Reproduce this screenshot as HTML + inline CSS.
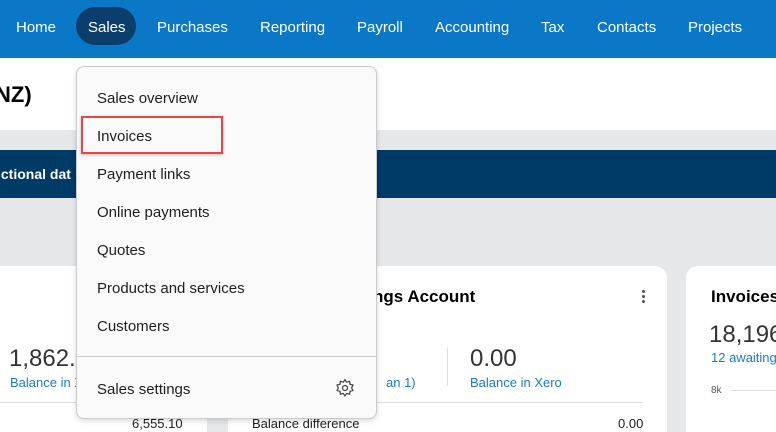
<!DOCTYPE html>
<html><head><style>
*{margin:0;padding:0;box-sizing:border-box}
html{width:776px;height:432px;overflow:hidden}
body{width:776px;height:432px;overflow:hidden;background:#e6e7e9;font-family:"Liberation Sans",sans-serif;position:relative;color:#000}
.a{position:absolute;white-space:nowrap}
.nav{position:absolute;left:0;top:0;width:776px;height:58px;background:#0a78c7}
.nav span{position:absolute;top:19px;font-size:15px;color:#fff}
.pill{position:absolute;left:76px;top:7px;width:60px;height:38px;border-radius:19px;background:#0b3e6c}
.card{position:absolute;background:#fff;border-radius:12px}
.blue{color:#1a7bc9}
.menu{position:absolute;left:76px;top:66px;width:301px;height:353px;background:#fafafa;border:1px solid #c8cacc;border-radius:8px;box-shadow:0 2px 6px rgba(0,0,0,.15)}
.menu div{position:absolute;left:20px;font-size:15px;color:#1e1e1e}
</style></head><body>
<div class="nav">
<div class="pill"></div>
<span style="left:16px">Home</span>
<span style="left:88px">Sales</span>
<span style="left:157px">Purchases</span>
<span style="left:260px">Reporting</span>
<span style="left:357px">Payroll</span>
<span style="left:435px">Accounting</span>
<span style="left:541px">Tax</span>
<span style="left:597px">Contacts</span>
<span style="left:688px">Projects</span>
</div>
<div class="a" style="left:0;top:58px;width:776px;height:72px;background:#fff"></div>
<div class="a" style="left:-5px;top:82px;font-size:22px;font-weight:bold">NZ)</div>
<div class="a" style="left:0;top:150px;width:776px;height:48px;background:#003a66"></div>
<div class="a" style="left:-3px;top:166px;font-size:14px;font-weight:bold;color:#fff">ictional dat</div>

<div class="card" style="left:-20px;top:266px;width:227px;height:180px"></div>
<div class="a" style="left:9px;top:345px;font-size:24px;color:#333">1,862.8</div>
<div class="a blue" style="left:10px;top:375px;font-size:13px">Balance in X</div>
<div class="a" style="left:0;top:402px;width:207px;height:1px;background:#ddd"></div>
<div class="a" style="left:132px;top:416px;font-size:13px;color:#222">6,555.10</div>

<div class="card" style="left:228px;top:266px;width:439px;height:180px"></div>
<div class="a" style="left:373px;top:287px;font-size:17px;font-weight:bold">ngs Account</div>
<div class="a" style="left:642px;top:290px;width:3px;height:3px;border-radius:50%;background:#555;box-shadow:0 5px 0 #555,0 10px 0 #555"></div>
<div class="a blue" style="left:372px;top:313px;font-size:13px">)</div>
<div class="a" style="left:447px;top:348px;width:1px;height:38px;background:#ddd"></div>
<div class="a" style="left:470px;top:345px;font-size:24px;color:#333">0.00</div>
<div class="a blue" style="left:386px;top:375px;font-size:13px">an 1)</div>
<div class="a blue" style="left:470px;top:375px;font-size:13px">Balance in Xero</div>
<div class="a" style="left:228px;top:402px;width:415px;height:1px;background:#ddd"></div>
<div class="a" style="left:252px;top:416px;font-size:13px;color:#222">Balance difference</div>
<div class="a" style="left:618px;top:416px;font-size:13px;color:#222">0.00</div>

<div class="card" style="left:686px;top:266px;width:120px;height:180px"></div>
<div class="a" style="left:711px;top:287px;font-size:17px;font-weight:bold">Invoices</div>
<div class="a" style="left:709px;top:321px;font-size:24px;color:#333">18,196</div>
<div class="a blue" style="left:711px;top:350px;font-size:13px">12 awaiting</div>
<div class="a" style="left:711px;top:385px;font-size:10px;color:#555">8k</div>
<div class="a" style="left:731px;top:390px;width:45px;height:1px;background:#ddd"></div>

<div class="menu">
<div style="top:23px">Sales overview</div>
<div style="top:61px">Invoices</div>
<div style="top:99px">Payment links</div>
<div style="top:137px">Online payments</div>
<div style="top:175px">Quotes</div>
<div style="top:213px">Products and services</div>
<div style="top:251px">Customers</div>
<div style="left:0;top:289px;width:299px;height:1px;background:#ccc"></div>
<div style="top:314px">Sales settings</div>
<svg style="position:absolute;left:258px;top:311px" width="20" height="20" viewBox="0 0 24 24" fill="none" stroke="#444" stroke-width="1.5"><circle cx="12" cy="12" r="3"/><path d="M12 2l2 3 3.5-1 .5 3.5 3.5 1-1.5 3.5 1.5 3-3.5 1-.5 3.5-3.5-1-2 3-2-3-3.5 1-.5-3.5-3.5-1 1.5-3-1.5-3.5 3.5-1L6.5 4 10 5z"/></svg>
</div>
<div class="a" style="left:81px;top:116px;width:142px;height:38px;border:2px solid #e84545;box-shadow:0 1px 3px rgba(0,0,0,.25)"></div>
</body></html>
